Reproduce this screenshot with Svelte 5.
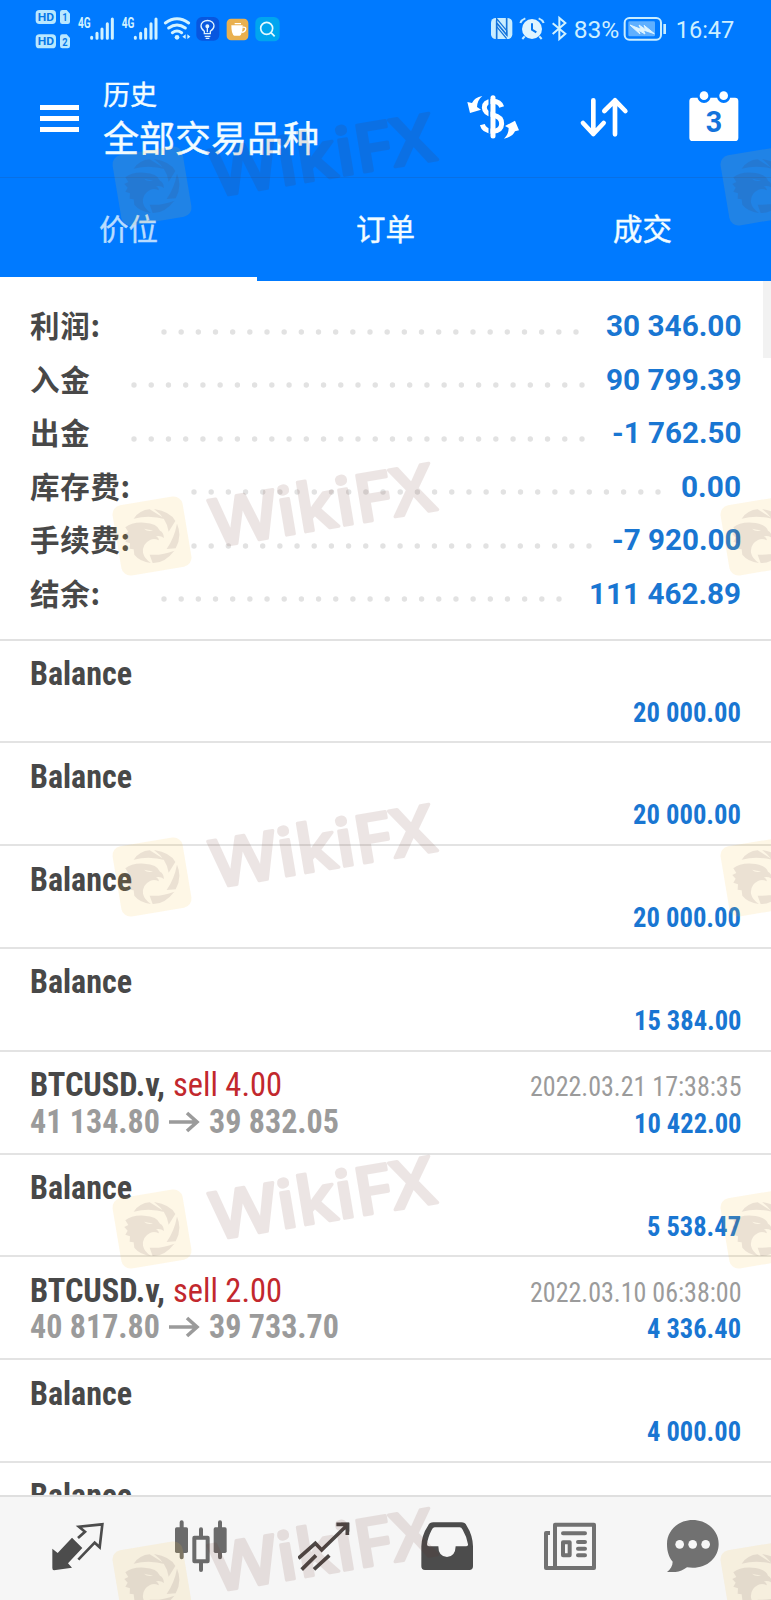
<script>
  const summary = [
    { label: '利润:', value: '30 346.00', w: 135.5, from: 164, to: 576 },
    { label: '入金', value: '90 799.39', w: 135.5, from: 134, to: 582 },
    { label: '出金', value: '-1 762.50', w: 129.5, from: 134, to: 582 },
    { label: '库存费:', value: '0.00', w: 60, from: 194, to: 658 },
    { label: '手续费:', value: '-7 920.00', w: 129.5, from: 194, to: 589 },
    { label: '结余:', value: '111 462.89', w: 152, from: 164, to: 559 }
  ];
  const deals = [
    { amount: '20 000.00', w: 108 },
    { amount: '20 000.00', w: 108 },
    { amount: '20 000.00', w: 108 },
    { amount: '15 384.00', w: 107.5 },
    { side: 'sell 4.00', open: '41 134.80', close: '39 832.05', date: '2022.03.21 17:38:35', amount: '10 422.00', w: 107.5 },
    { amount: '5 538.47', w: 94 },
    { side: 'sell 2.00', open: '40 817.80', close: '39 733.70', date: '2022.03.10 06:38:00', amount: '4 336.40', w: 94 },
    { amount: '4 000.00', w: 94 },
    { amount: '', w: 0 }
  ];
  const tabs = ['价位', '订单', '成交'];
  const stamps = [186, 536, 877, 1229, 1581];
</script>

{#snippet fit(str, w, size, cls)}
  <svg class="fit" width={w} height="33"><text class={cls} x="0" y="27" font-size={size} textLength={w} lengthAdjust="spacingAndGlyphs">{str}</text></svg>
{/snippet}

<div class="screen">
  <header>
    <div class="status">
      <svg width="270" height="60" viewBox="0 0 810 180">
        <g fill="#b9e8ff">
          <rect x="47" y="30" width="61" height="42" rx="11" />
          <rect x="47" y="103" width="61" height="42" rx="11" />
          <path d="M127 30h13l10 11v24q0 7-7 7h-16q-7 0-7-7V37q0-7 7-7zM127 103h13l10 11v24q0 7-7 7h-16q-7 0-7-7v-28q0-7 7-7z" />
        </g>
        <g class="tiny" fill="#0879e8">
          <text x="53" y="63" font-size="34" textLength="49" lengthAdjust="spacingAndGlyphs">HD</text>
          <text x="53" y="136" font-size="34" textLength="49" lengthAdjust="spacingAndGlyphs">HD</text>
          <text x="127" y="64" font-size="32" textLength="16" lengthAdjust="spacingAndGlyphs">1</text>
          <text x="127" y="137" font-size="32" textLength="16" lengthAdjust="spacingAndGlyphs">2</text>
        </g>
        {#each [0, 131] as dx}
          <g transform="translate({dx} 0)" fill="#d2f2ff">
            <text class="tiny" x="174" y="83" font-size="43" textLength="38" lengthAdjust="spacingAndGlyphs">4G</text>
            <g stroke="#d2f2ff" stroke-width="9" stroke-linecap="round">
              <path d="M215 112v3M231 100v15M246 87v28M262 71v44M277 57v58" />
            </g>
          </g>
        {/each}
        <g fill="none" stroke="#d2f2ff" stroke-width="9" stroke-linecap="round">
          <path d="M436 69q35-25 70 0M446 84q25-18 50 0M457 98q14-10 28 0" />
        </g>
        <circle cx="471" cy="112" r="7" fill="#d2f2ff" />
        <path d="M497 103v14l-10-7zM502 103v14l9-7z" fill="#d2f2ff" />
        <rect x="529" y="51" width="69" height="71" rx="17" fill="#0857df" />
        <g fill="none" stroke="#dff3ff" stroke-width="4">
          <path d="M553 101v-7q-10-8-10-17a19 15 0 0 1 39 0q0 9-11 17v7zM554 109h17M557 115h11M562 97V84" />
          <circle cx="562" cy="79" r="4" fill="#dff3ff" />
        </g>
        <rect x="620" y="56" width="65" height="65" rx="13" fill="#e9b04f" />
        <path d="M634 76h34q0 28-9 31h-16q-9-3-9-31z" fill="#fff" />
        <path d="M667 82q12-2 10 6t-12 9M644 71h19" fill="none" stroke="#fff" stroke-width="4" />
        <rect x="706" y="51" width="73" height="73" rx="17" fill="#00a5ef" />
        <circle cx="740" cy="85" r="18" fill="none" stroke="#e5faff" stroke-width="5" />
        <path d="M753 98l11 11" stroke="#e5faff" stroke-width="5" />
      </svg>
      <svg width="270" height="60" viewBox="0 0 810 180">
        <rect x="33" y="54" width="64" height="63" rx="14" fill="#c9edff" />
        <path d="M50 117V68l30 36V54" fill="none" stroke="#1474dc" stroke-width="5" />
        <path d="M50 56l30 36V104L50 68zM50 80l30 36" fill="#c9edff" stroke="#1474dc" stroke-width="4" />
        <circle cx="156" cy="87" r="30" fill="#dff5ff" />
        <path d="M121 69q4-10 15-14M191 69q-4-10-15-14M134 109l-7 8M178 109l7 8" fill="none" stroke="#c9edff" stroke-width="6" />
        <path d="M156 70v19l13 8" fill="none" stroke="#0878ef" stroke-width="6" />
        <path d="M218 70l38 31-18 16V54l18 15-38 33" fill="none" stroke="#d2f2ff" stroke-width="6" />
        <g class="clock" fill="#cdefff">
          <text x="281" y="115" font-size="72" textLength="137" lengthAdjust="spacingAndGlyphs">83%</text>
          <text x="587" y="115" font-size="72" textLength="176" lengthAdjust="spacingAndGlyphs">16:47</text>
        </g>
        <rect x="434" y="54" width="109" height="65" rx="14" fill="none" stroke="#c9edff" stroke-width="6" />
        <rect x="445" y="64" width="80" height="45" rx="4" fill="#5fb0ff" />
        <path d="M450 75l33 13-6-13 20 14-5-13 31 25-33-11 5 12-20-12 5 12z" fill="#dff5ff" stroke="#dff5ff" stroke-width="3" />
        <path d="M554 72v30" stroke="#c9edff" stroke-width="8" />
      </svg>
    </div>
    <div class="bar">
      <div class="menu"><i></i><i></i><i></i></div>
      <div class="title">
        <span class="sub">历史</span>
        <span class="main">全部交易品种</span>
      </div>
      <svg class="cash" width="52" height="52" viewBox="80 65 156 156">
        <g fill="none" stroke="#fff" stroke-width="15">
          <path d="M184 113q-5-16-27-17-25 1-25 19 1 17 26 22 27 6 26 27-1 21-27 22-26-1-31-20" />
        </g>
        <path d="M147.500 86v106" stroke="#007aff" stroke-width="6" />
        <path d="M158 85v115" stroke="#fff" stroke-width="15" stroke-linecap="round" />
        <path d="M126 80q-24 4-31 21l-14-3 8 33 33-10-12-8q1-21 16-33zM191 208q25-5 33-22l12-3-12-29-30 16 11 6q0 19-14 32z" fill="#fff" />
      </svg>
      <svg class="sort" width="52" height="52" viewBox="414 65 156 156">
        <g fill="none" stroke="#fff" stroke-width="14" stroke-linecap="round" stroke-linejoin="round">
          <path d="M460 93v101M429 161l31 33 31-33M525 195V93M493 125l32-32 31 32" />
        </g>
      </svg>
      <svg class="cal" width="52" height="52" viewBox="746 65 156 156">
        <rect x="750" y="85" width="147" height="130" rx="10" fill="#fff" />
        <circle cx="794" cy="81" r="20" fill="#007aff" />
        <circle cx="853" cy="81" r="20" fill="#007aff" />
        <circle cx="794" cy="79" r="13" fill="#fff" />
        <circle cx="853" cy="79" r="13" fill="#fff" />
        <text class="day" x="824" y="187" font-size="86" text-anchor="middle">3</text>
      </svg>
    </div>
    <nav class="tabs">
      {#each tabs as tab, i}
        <span class:active={i === 0}>{tab}</span>
      {/each}
    </nav>
  </header>

  <main>
    <div class="thumb"></div>
    <section class="summary">
      {#each summary as s}
        <div class="line">
          <span class="label" style="width:{s.from - 33}px">{s.label}</span>
          <svg class="dots" width={s.to - s.from + 6} height="6">
            {#each Array(Math.round((s.to - s.from) / 17.17) + 1) as _, k}
              <circle cx={3 + k * ((s.to - s.from) / Math.round((s.to - s.from) / 17.17))} cy="3" r="2.7" />
            {/each}
          </svg>
          <span class="value">{@render fit(s.value, s.w, 29.5, 'num')}</span>
        </div>
      {/each}
    </section>
    {#each deals as d}
      <article>
        <div class="row">
          {#if d.side}
            <span class="pair">{@render fit('BTCUSD.v,', 135, 33.5, 'name')}{@render fit(d.side, 109, 33.5, 'sell')}</span>
            {@render fit(d.date, 211.5, 27, 'date')}
          {:else}
            {@render fit('Balance', 102, 33.5, 'name')}
          {/if}
        </div>
        <div class="row second">
          {#if d.open}
            <span class="prices">
              {@render fit(d.open, 130, 33.5, 'price')}
              <svg width="31" height="33" viewBox="0 0 31 33"><path d="M0 16h28M18 7l10 9-10 9" fill="none" stroke="#9b9b9b" stroke-width="3.6" /></svg>
              {@render fit(d.close, 130, 33.5, 'price')}
            </span>
          {:else}
            <span></span>
          {/if}
          {#if d.amount}{@render fit(d.amount, d.w, 27.5, 'num')}{/if}
        </div>
      </article>
    {/each}
  </main>

  <footer>
    <svg viewBox="157 92 156 156">
      <path d="M158 178l16 13 43-46 31 31-43 46 12 13-54 8q-5 0-5-7z" fill="#4c4c4c" />
      <path d="M235 146l21-19-18-15 70-7-8 69-15-14-49 51" fill="none" stroke="#4c4c4c" stroke-width="8" />
    </svg>
    <svg viewBox="526 92 156 156">
      <g stroke="#6b6b6b" stroke-width="12" stroke-linecap="round"><path d="M546 99v105M661 99v105M604 120v22M604 218v24" /></g>
      <rect x="526" y="114" width="39" height="77" rx="5" fill="#6b6b6b" />
      <rect x="642" y="114" width="39" height="77" rx="5" fill="#6b6b6b" />
      <rect x="584" y="145" width="40" height="71" fill="none" stroke="#6b6b6b" stroke-width="12" stroke-linejoin="round" />
    </svg>
    <svg viewBox="897 92 156 156">
      <path d="M898 207l51-45 19 20 74-72M1012 105h33v32M908 241l43-43M945 240l46-42" fill="none" stroke="#4c4745" stroke-width="11" />
      <path d="M1026 100h25v27z" fill="#4c4745" />
    </svg>
    <svg viewBox="122 92 156 156">
      <path fill-rule="evenodd" d="M159 99h84q11 0 16 10 18 28 19 62v60q0 11-11 11H134q-11 0-11-11v-60q1-34 20-62 5-10 16-10zM163 114q-6 0-9 8-12 23-14 43 0 6 6 6h28q0 31 26 32 25-1 26-32h32q6 0 5-6-4-24-16-44-4-7-9-7z" fill="#4c4c4c" />
    </svg>
    <svg viewBox="492 92 156 156">
      <g fill="none" stroke="#717171" stroke-width="12" stroke-linejoin="round">
        <path d="M525 106h117v130H525zM510 131h-12v105h27" />
        <path d="M549 159h20v39h-20z" />
        <path d="M549 132h66M594 158h21M594 178h21M594 198h21" stroke-width="12" stroke-linecap="round" />
      </g>
    </svg>
    <svg viewBox="861 92 156 156">
      <path d="M938 92c43 0 78 31 78 72 0 46-43 79-95 70-18 14-37 16-60 14 10-8 17-19 17-31-11-13-17-30-17-53 0-41 34-72 77-72z" fill="#717171" />
      <g fill="#f6f6f6"><circle cx="899" cy="165" r="13" /><circle cx="938" cy="165" r="13" /><circle cx="977" cy="165" r="13" /></g>
    </svg>
  </footer>

  <svg class="stamps" width="771" height="1600" viewBox="0 0 771 1600">
    <defs>
      <g id="badge">
        <rect x="-35.500" y="-35.500" width="71" height="71" rx="9" transform="rotate(-9.5)" fill="#f7c43c" opacity=".13" />
        <g transform="scale(.3333) translate(-187 -288)" fill="#4b2838" opacity=".1">
          <path d="M132 236Q150 210 180 208L228 238Q180 224 132 236zM193 207Q243 215 257 243L237 275Q232 235 193 207zM262 251Q278 288 258 325L231 327Q254 294 262 251zM254 332Q225 370 189 369L180 344Q217 347 254 332z" />
          <path fill-rule="evenodd" d="M107 262Q126 246 163 248 203 250 211 272 222 277 223 294 212 285 199 289 209 295 207 301 194 294 181 300 157 312 160 338 164 356 184 369 151 365 134 344 L132 328 120 326 121 310 107 305 114 293 104 282 116 276zM163 266Q174 276 190 271 177 269 163 266z" />
        </g>
      </g>
      <g id="brand" opacity=".115">
        <text class="brand" x="0" y="0" font-size="66" textLength="226" lengthAdjust="spacingAndGlyphs">WikiFX</text>
      </g>
    </defs>
    {#each stamps as y}
      <use href="#badge" x="152" y={y} />
      <use href="#badge" x="760" y={y} />
      <g transform="translate(215 {y + 11}) rotate(-9.5)"><use href="#brand" /></g>
    {/each}
  </svg>
</div>

<style>
  :global(body) { margin: 0; background: #fff; }
  .screen {
    position: relative;
    width: 771px;
    height: 1600px;
    overflow: hidden;
    display: flex;
    flex-direction: column;
    background: #fff;
    font-family: Roboto, 'Noto Sans CJK SC', sans-serif;
  }
  svg { display: block; flex: none; }
  header { flex: none; height: 280.5px; background: #007aff; color: #f2fcff; }
  .status { height: 60px; padding: 0 21px 0 20px; display: flex; justify-content: space-between; }
  .tiny { font-family: Roboto, sans-serif; font-weight: 700; }
  .clock { font-family: Roboto, sans-serif; font-weight: 400; }
  .bar {
    height: 117.500px;
    display: flex;
    align-items: flex-start;
    border-bottom: 1px solid #0870e5;
    box-sizing: border-box;
  }
  .menu { width: 39px; margin: 45px 24px 0 40px; display: grid; gap: 6px; }
  .menu i { height: 5px; background: #fff; }
  .title { width: 364px; padding-top: 18px; display: flex; flex-direction: column; font-family: 'Noto Sans CJK SC', sans-serif; -webkit-text-stroke: 0.4px currentColor; }
  .sub { font-size: 27px; line-height: 32px; }
  .main { font-size: 36px; line-height: 46px; margin-top: 3px; }
  .cash { margin-top: 31px; }
  .sort { margin: 31px 0 0 59px; }
  .cal { margin: 31px 0 0 58px; }
  .day { fill: #1473dc; font-weight: 700; font-family: Roboto, sans-serif; }
  .tabs { height: 103px; display: grid; grid-template-columns: repeat(3, 1fr); text-align: center; font: 400 29.5px/99px 'Noto Sans CJK SC', sans-serif; -webkit-text-stroke: 0.4px currentColor; }
  .tabs span { box-sizing: border-box; height: 103px; padding-top: 1.5px; line-height: 97.500px; border-bottom: 4px solid transparent; padding-bottom: 0; }
  .tabs .active { color: #b9dcff; border-color: #fff; }
  main { flex: none; height: 1214px; overflow: hidden; position: relative; }
  .thumb { position: absolute; right: 0; top: 0; width: 8px; height: 77px; background: #f2f2f2; }
  .summary { height: 360.2px; box-sizing: border-box; padding: 18px 30px 0; border-bottom: 2px solid #e1e1e1; }
  .line { height: 53.6px; display: flex; align-items: flex-start; }
  .label { margin-top: -1.500px; line-height: 54px; font-size: 29.5px; letter-spacing: 0.7px; font-weight: 700; color: #484848; font-family: 'Noto Sans CJK SC', sans-serif; white-space: nowrap; }
  .dots { margin-top: 30px; fill: #e2e2e2; }
  .value { margin-left: auto; padding-top: 10.5px; }
  .fit { overflow: visible; }
  .fit text { font-family: 'Roboto Condensed', Roboto, sans-serif; }
  .fit .num { fill: #1976d2; font-weight: 700; }
  .value :global(text) { font-family: Roboto, sans-serif; font-weight: 600; }
  .fit .name { fill: #484848; font-weight: 700; }
  .fit .sell { fill: #c2282d; font-weight: 400; }
  .fit .date { fill: #9b9b9b; font-weight: 400; }
  .fit .price { fill: #9b9b9b; font-weight: 700; }
  article { height: 102.78px; box-sizing: border-box; padding: 17.500px 30px 0; border-bottom: 2px solid #e3e3e3; }
  .row { height: 33px; display: flex; justify-content: space-between; }
  .second { margin-top: 3.5px; }
  .pair { display: flex; gap: 8px; }
  .prices { display: flex; gap: 9px; }
  footer {
    flex: none;
    height: 106px;
    box-sizing: border-box;
    border-top: 2px solid #dfdfdf;
    background: #f6f6f6;
    padding: 23.5px 17px 0 16px;
    display: flex;
    justify-content: space-around;
    align-items: flex-start;
  }
  footer svg { width: 52px; height: 52px; }
  .stamps { position: absolute; left: 0; top: 0; pointer-events: none; }
  .brand { font-family: 'Noto Sans', sans-serif; font-weight: 500; fill: #64281e; stroke: #64281e; stroke-width: 3.2; stroke-linejoin: round; }
</style>
